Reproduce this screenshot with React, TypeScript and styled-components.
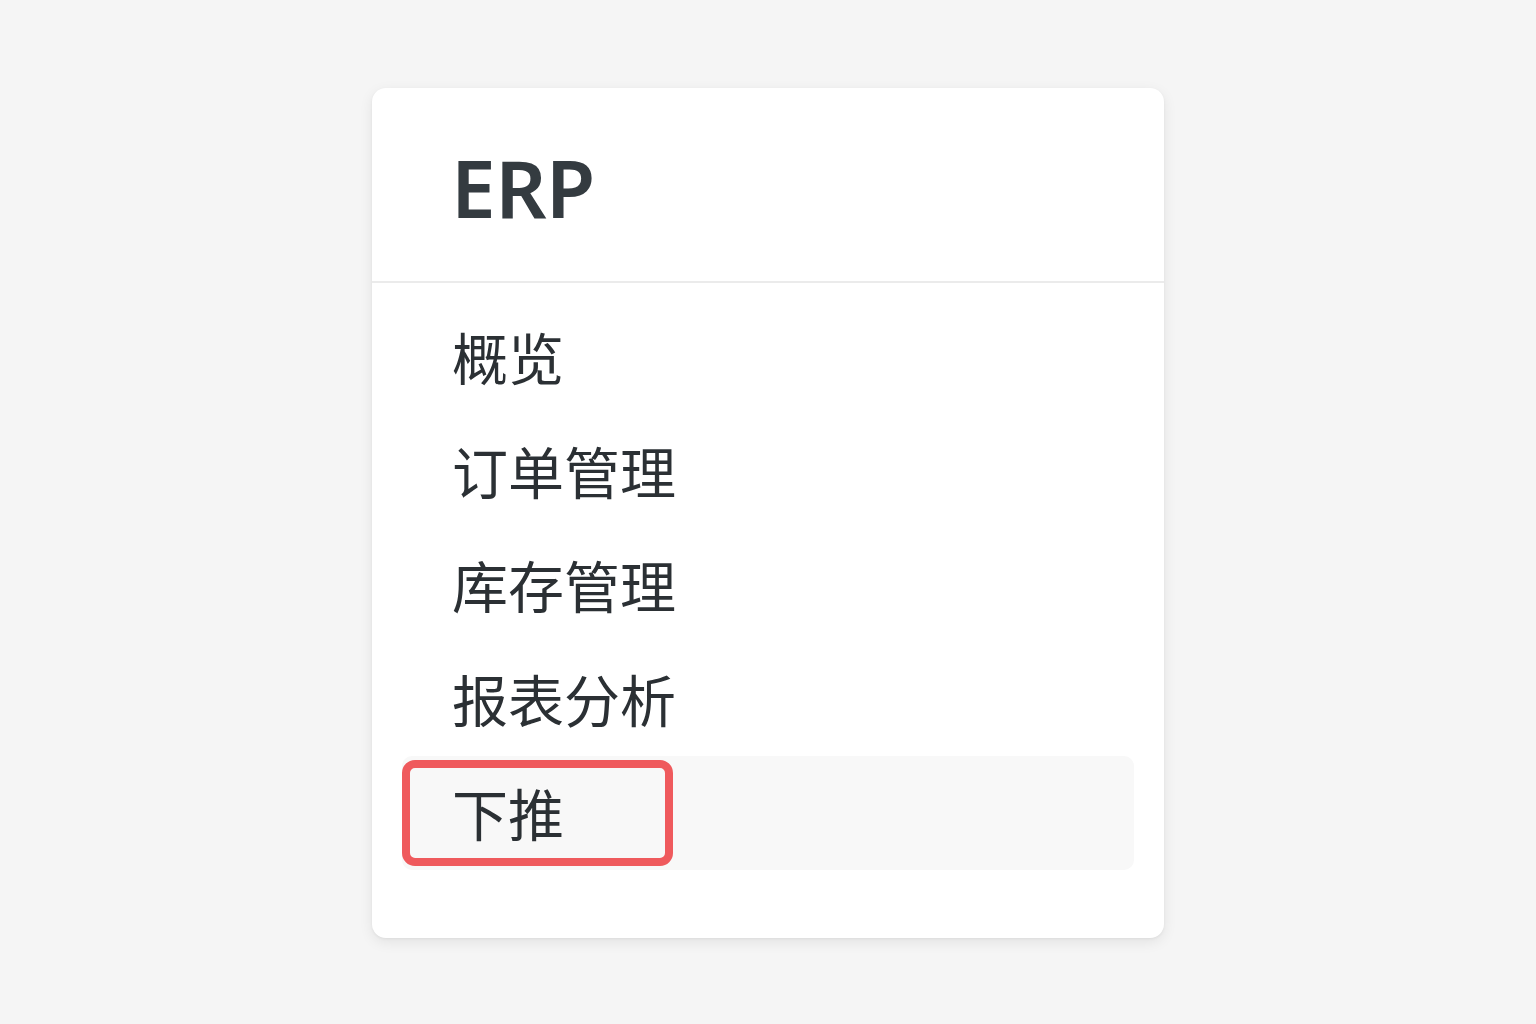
import styled, { createGlobalStyle } from 'styled-components';

const GlobalStyle = createGlobalStyle`
  html, body {
    margin: 0;
    padding: 0;
    background: #f5f5f5;
  }
  body {
    font-family: "Noto Sans", "Noto Sans CJK SC", sans-serif;
  }
`;

const Page = styled.div`
  width: 100%;
  min-height: 1024px;
  display: flex;
  justify-content: center;
  align-items: flex-start;
  padding-top: 88px;
  box-sizing: border-box;
`;

const Card = styled.div`
  width: 792px;
  height: 850px;
  background: #ffffff;
  border-radius: 14px;
  box-shadow: 0 4px 14px rgba(0, 0, 0, 0.08), 0 1px 3px rgba(0, 0, 0, 0.05);
  display: flex;
  flex-direction: column;
  box-sizing: border-box;
`;

const Header = styled.div`
  height: 195px;
  display: flex;
  align-items: center;
  padding-left: 79px;
  padding-top: 4px;
  box-sizing: border-box;
  border-bottom: 2px solid #ebebeb;
`;

const Logo = styled.h1`
  margin: 0;
  font-family: "Noto Sans", sans-serif;
  font-weight: 600;
  font-size: 80px;
  color: #343b40;
  letter-spacing: -0.5px;
  line-height: 1;
`;

const Menu = styled.ul`
  list-style: none;
  margin: 0;
  padding: 17px 30px 0;
  display: flex;
  flex-direction: column;
`;

const Item = styled.li<{ $active?: boolean }>`
  position: relative;
  height: 114px;
  display: flex;
  align-items: center;
  padding-left: 50px;
  padding-bottom: 4px;
  box-sizing: border-box;
  border-radius: 10px;
  background: ${p => (p.$active ? '#f8f8f8' : 'transparent')};
  font-family: "Noto Sans CJK SC", "Noto Sans", sans-serif;
  font-size: 56px;
  color: #2b3034;
`;

const Mark = styled.span`
  position: absolute;
  left: 0;
  top: 4px;
  width: 271px;
  height: 106px;
  border: 8px solid #ef5a5d;
  border-radius: 13px;
  box-sizing: border-box;
  pointer-events: none;
`;

const items = ['概览', '订单管理', '库存管理', '报表分析', '下推'];

const App = () => {
  return (
    <>
      <GlobalStyle />
      <Page>
        <Card>
          <Header>
            <Logo>ERP</Logo>
          </Header>
          <Menu>
            {items.map(label => (
              <Item key={label} $active={label === '下推'}>
                {label}
                {label === '下推' && <Mark />}
              </Item>
            ))}
          </Menu>
        </Card>
      </Page>
    </>
  );
};

export default App;
